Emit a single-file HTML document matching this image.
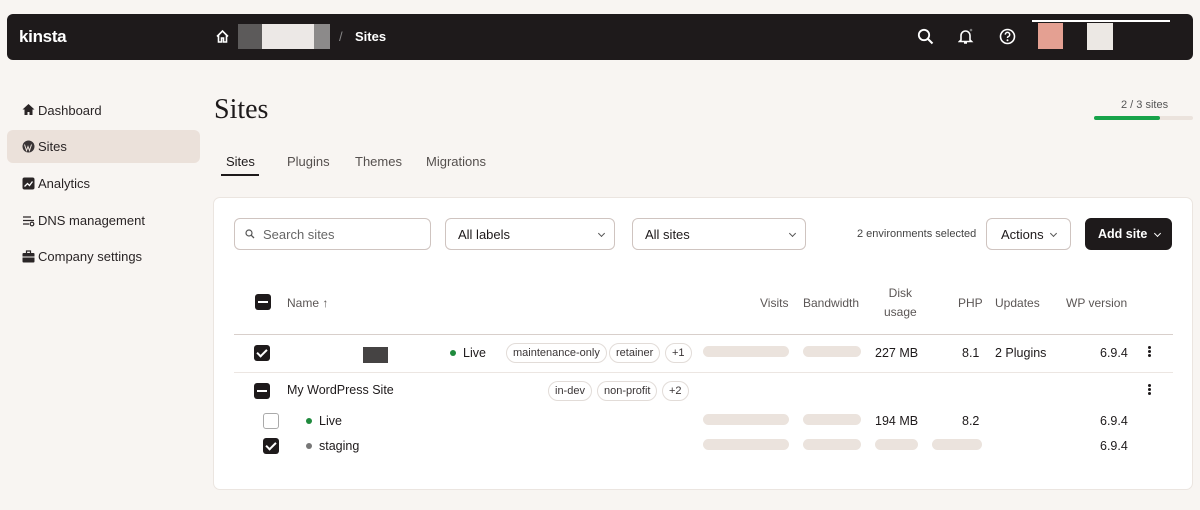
<!DOCTYPE html>
<html><head><meta charset="utf-8"><style>
*{box-sizing:border-box;margin:0;padding:0}
body{width:1200px;height:510px;background:#f8f5f2;font-family:"Liberation Sans",sans-serif;color:#1e1a1b;position:relative;overflow:hidden;font-size:13px}
.a{position:absolute;white-space:nowrap}
.hdr{left:7px;top:14px;width:1186px;height:46px;background:#1e1a1b;border-radius:6px}
.nav{left:38px;font-size:13px;color:#2a2526}
.ic{position:absolute;left:22px}
.tab{top:154px;font-size:13px;color:#55504e}
.card{left:213px;top:197px;width:980px;height:293px;background:#fff;border:1px solid #ebe5e0;border-radius:7px}
.inp{top:218px;height:32px;border:1px solid #cfc4c0;border-radius:6px;background:#fff;font-size:13px;padding:8px 12px;color:#1e1a1b}
.chev{position:absolute;right:10px;top:12px;width:5px;height:5px;border-right:1.3px solid #555;border-bottom:1.3px solid #555;transform:rotate(45deg)}
.th{top:296px;font-size:12px;color:#5b5655}
.cb{width:16px;height:16px;border-radius:3px;background:#1e1a1b}
.cb.min::after{content:"";position:absolute;left:3px;top:7px;width:10px;height:2px;background:#fff}
.cb.chk::after{content:"";position:absolute;left:5px;top:2px;width:4px;height:8px;border-right:2px solid #fff;border-bottom:2px solid #fff;transform:rotate(45deg)}
.cb.empty{background:#fff;border:1px solid #aaa}
.pill{height:20px;border:1px solid #e2dcd8;border-radius:10px;font-size:11px;padding:3px 6px;color:#3a3536}
.ph{height:11px;background:#ebe3dd;border-radius:6px}
.td{font-size:12.5px;color:#1e1a1b}
.dot{width:6px;height:6px;border-radius:3px}
.kb{width:3px;height:3px;border-radius:2px;background:#1e1a1b;position:absolute;left:0}
</style></head><body>
<div class="a hdr"></div>
<div class="a" style="left:19px;top:27px;font-size:17px;font-weight:bold;color:#fff;letter-spacing:-0.3px">kinsta</div>
<svg class="a" style="left:215px;top:29px" width="15" height="15" viewBox="0 0 15 15"><path d="M2 7.5L7.5 2L13 7.5M3.5 6v7h3v-4h2v4h3V6" stroke="#fff" stroke-width="1.6" fill="none"/></svg>
<div class="a" style="left:238px;top:24px;width:24px;height:25px;background:#5c5a5a"></div>
<div class="a" style="left:262px;top:24px;width:52px;height:25px;background:#ece8e6"></div>
<div class="a" style="left:314px;top:24px;width:16px;height:25px;background:#8c8a8a"></div>
<div class="a" style="left:339px;top:29px;color:#888;font-size:13px">/</div>
<div class="a" style="left:355px;top:29px;color:#fff;font-size:13px;font-weight:bold">Sites</div>
<svg class="a" style="left:917px;top:28px" width="17" height="17" viewBox="0 0 17 17"><circle cx="7" cy="7" r="5.2" stroke="#fff" stroke-width="1.8" fill="none"/><path d="M11 11l4.5 4.5" stroke="#fff" stroke-width="2"/></svg>
<svg class="a" style="left:958px;top:28px" width="16" height="17" viewBox="0 0 16 17"><path d="M3 12V7.5a4.5 4.5 0 0 1 9 0V12l1.5 1.5h-12z M6 15h3" stroke="#fff" stroke-width="1.6" fill="none"/><circle cx="13" cy="2" r="1.3" fill="#777"/></svg>
<svg class="a" style="left:999px;top:28px" width="17" height="17" viewBox="0 0 17 17"><circle cx="8.5" cy="8.5" r="7" stroke="#fff" stroke-width="1.6" fill="none"/><path d="M6.3 6.6a2.2 2.2 0 1 1 2.8 2.1c-.6.2-.6.7-.6 1.3" stroke="#fff" stroke-width="1.5" fill="none"/><circle cx="8.5" cy="12.3" r="1" fill="#fff"/></svg>
<div class="a" style="left:1032px;top:20px;width:138px;height:2px;background:#fff"></div>
<div class="a" style="left:1038px;top:23px;width:25px;height:26px;background:#e4a092"></div>
<div class="a" style="left:1087px;top:23px;width:26px;height:27px;background:#ece8e4"></div>

<div class="a" style="left:7px;top:130px;width:193px;height:33px;background:#ebe1da;border-radius:6px"></div>
<svg class="ic" style="top:103px" width="13" height="13" viewBox="0 0 13 13"><path d="M6.5 1L0.5 6.5h2V12h3V9h2v3h3V6.5h2z" fill="#2a2526"/></svg>
<div class="a nav" style="top:103px">Dashboard</div>
<svg class="ic" style="top:140px" width="13" height="13" viewBox="0 0 13 13"><circle cx="6.5" cy="6.5" r="6" fill="#3a3536"/><path d="M2.5 4.5l2 6 1.5-4 1.5 4 2-6" stroke="#ebe1da" stroke-width="1" fill="none"/></svg>
<div class="a nav" style="top:139px">Sites</div>
<svg class="ic" style="top:177px" width="13" height="13" viewBox="0 0 13 13"><rect x="0.5" y="0.5" width="12" height="12" rx="2" fill="#2a2526"/><path d="M2.5 9.5l3-3 2 2 3-4" stroke="#fff" stroke-width="1.3" fill="none"/></svg>
<div class="a nav" style="top:176px">Analytics</div>
<svg class="ic" style="top:214px" width="13" height="13" viewBox="0 0 13 13"><path d="M1 3h8M1 6.5h11M1 10h6" stroke="#2a2526" stroke-width="1.3"/><circle cx="10" cy="10" r="1.8" stroke="#2a2526" stroke-width="1.2" fill="none"/></svg>
<div class="a nav" style="top:213px">DNS management</div>
<svg class="ic" style="top:250px" width="13" height="13" viewBox="0 0 13 13"><rect x="0.5" y="3" width="12" height="9.5" rx="1" fill="#2a2526"/><path d="M4.5 3V1h4v2" stroke="#2a2526" stroke-width="1.2" fill="none"/><path d="M0.5 7h12" stroke="#f8f5f2" stroke-width="1"/></svg>
<div class="a nav" style="top:249px">Company settings</div>

<div class="a" style="left:214px;top:94px;font-family:'Liberation Serif',serif;font-size:28px">Sites</div>
<div class="a" style="left:1121px;top:99px;font-size:11px;color:#555">2 / 3 sites</div>
<div class="a" style="left:1094px;top:116px;width:99px;height:4px;background:#ebe3dd;border-radius:2px"></div>
<div class="a" style="left:1094px;top:116px;width:66px;height:4px;background:#17a34a;border-radius:2px"></div>

<div class="a tab" style="left:226px;color:#1e1a1b">Sites</div>
<div class="a" style="left:221px;top:174px;width:38px;height:2px;background:#1e1a1b"></div>
<div class="a tab" style="left:287px">Plugins</div>
<div class="a tab" style="left:355px">Themes</div>
<div class="a tab" style="left:426px">Migrations</div>

<div class="a card"></div>
<div class="a inp" style="left:234px;width:197px;color:#666;padding-left:28px">Search sites</div>
<svg class="a" style="left:245px;top:229px" width="10" height="10" viewBox="0 0 10 10"><circle cx="4" cy="4" r="3" stroke="#555" stroke-width="1.2" fill="none"/><path d="M6.3 6.3L9 9" stroke="#555" stroke-width="1.3"/></svg>
<div class="a inp" style="left:445px;width:170px">All labels<span class="chev"></span></div>
<div class="a inp" style="left:632px;width:174px">All sites<span class="chev"></span></div>
<div class="a" style="left:857px;top:228px;font-size:11px;color:#444">2 environments selected</div>
<div class="a inp" style="left:986px;width:85px;padding-left:14px">Actions<span class="chev" style="right:14px"></span></div>
<div class="a inp" style="left:1085px;width:87px;background:#1e1a1b;border-color:#1e1a1b;color:#fff;font-weight:bold;padding-left:12px;font-size:12.5px">Add site<span class="chev" style="right:11px;border-color:#fff"></span></div>

<div class="a cb min" style="left:255px;top:294px"></div>
<div class="a th" style="left:287px">Name ↑</div>
<div class="a th" style="left:760px">Visits</div>
<div class="a th" style="left:803px">Bandwidth</div>
<div class="a th" style="left:884px;top:284px;text-align:center;line-height:19px">Disk<br>usage</div>
<div class="a th" style="left:958px">PHP</div>
<div class="a th" style="left:995px">Updates</div>
<div class="a th" style="left:1066px;width:61px;overflow:hidden">WP version</div>
<div class="a" style="left:234px;top:334px;width:939px;height:1px;background:#d8cfcb"></div>

<div class="a cb chk" style="left:254px;top:345px"></div>
<div class="a" style="left:363px;top:347px;width:25px;height:16px;background:#454343"></div>
<div class="a dot" style="left:450px;top:350px;background:#1f8a3d"></div>
<div class="a td" style="left:463px;top:346px">Live</div>
<div class="a pill" style="left:506px;top:343px">maintenance-only</div>
<div class="a pill" style="left:609px;top:343px">retainer</div>
<div class="a pill" style="left:665px;top:343px">+1</div>
<div class="a ph" style="left:703px;top:346px;width:86px"></div>
<div class="a ph" style="left:803px;top:346px;width:58px"></div>
<div class="a td" style="left:875px;top:346px">227 MB</div>
<div class="a td" style="left:962px;top:346px">8.1</div>
<div class="a td" style="left:995px;top:346px">2 Plugins</div>
<div class="a td" style="left:1100px;top:346px;width:28px;overflow:hidden">6.9.4</div>
<div class="a" style="left:1148px;top:346px;width:3px;height:12px"><span class="kb" style="top:0"></span><span class="kb" style="top:4px"></span><span class="kb" style="top:8px"></span></div>
<div class="a" style="left:234px;top:372px;width:939px;height:1px;background:#ece6e2"></div>

<div class="a cb min" style="left:254px;top:383px"></div>
<div class="a td" style="left:287px;top:383px">My WordPress Site</div>
<div class="a pill" style="left:548px;top:381px">in-dev</div>
<div class="a pill" style="left:597px;top:381px">non-profit</div>
<div class="a pill" style="left:662px;top:381px">+2</div>
<div class="a" style="left:1148px;top:384px;width:3px;height:12px"><span class="kb" style="top:0"></span><span class="kb" style="top:4px"></span><span class="kb" style="top:8px"></span></div>

<div class="a cb empty" style="left:263px;top:413px"></div>
<div class="a dot" style="left:306px;top:418px;background:#1f8a3d"></div>
<div class="a td" style="left:319px;top:414px">Live</div>
<div class="a ph" style="left:703px;top:414px;width:86px"></div>
<div class="a ph" style="left:803px;top:414px;width:58px"></div>
<div class="a td" style="left:875px;top:414px">194 MB</div>
<div class="a td" style="left:962px;top:414px">8.2</div>
<div class="a td" style="left:1100px;top:414px;width:28px;overflow:hidden">6.9.4</div>

<div class="a cb chk" style="left:263px;top:438px"></div>
<div class="a dot" style="left:306px;top:443px;background:#777"></div>
<div class="a td" style="left:319px;top:439px">staging</div>
<div class="a ph" style="left:703px;top:439px;width:86px"></div>
<div class="a ph" style="left:803px;top:439px;width:58px"></div>
<div class="a ph" style="left:875px;top:439px;width:43px"></div>
<div class="a ph" style="left:932px;top:439px;width:50px"></div>
<div class="a td" style="left:1100px;top:439px;width:28px;overflow:hidden">6.9.4</div>
</body></html>
